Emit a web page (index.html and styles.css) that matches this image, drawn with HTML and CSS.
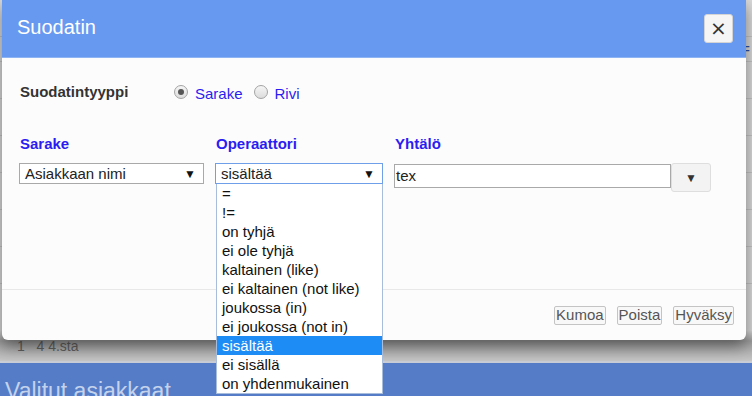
FILE: index.html
```html
<!DOCTYPE html>
<html>
  <head>
    <title>Suodatin</title>
    <meta name="viewport" content="width=device-width,initial-scale=1">
    <link rel="stylesheet" href="styles.css">
  </head>
  <body>
    <div class="page">
      <div class="page-rows">
        <div class="page-row"></div>
        <div class="page-row page-row-link">=</div>
        <div class="page-row"></div>
        <div class="page-row"></div>
        <div class="page-row"></div>
        <div class="page-row"></div>
        <div class="page-row"></div>
        <div class="page-row"></div>
        <div class="page-foot">1&nbsp;&nbsp;&nbsp;4 4.sta</div>
      </div>
      <div class="page-bar">Valitut asiakkaat</div>
    </div>

    <div class="modal">
      <div class="modal-header">
        <div class="modal-title">Suodatin</div>
        <button class="modal-close">&times;</button>
      </div>
      <div class="modal-body">
        <div class="type-row">
          <div class="type-label">Suodatintyyppi</div>
          <label class="radio"><span class="radio-dot radio-dot-on"></span>Sarake</label>
          <label class="radio"><span class="radio-dot"></span>Rivi</label>
        </div>
        <div class="fields">
          <div class="field field-column">
            <div class="field-label">Sarake</div>
            <div class="select"><span>Asiakkaan nimi</span><span class="arrow">&#9660;</span></div>
          </div>
          <div class="field field-op">
            <div class="field-label">Operaattori</div>
            <div class="select select-open"><span>sisältää</span><span class="arrow">&#9660;</span></div>
            <ul class="options">
              <li>=</li>
              <li>!=</li>
              <li>on tyhjä</li>
              <li>ei ole tyhjä</li>
              <li>kaltainen (like)</li>
              <li>ei kaltainen (not like)</li>
              <li>joukossa (in)</li>
              <li>ei joukossa (not in)</li>
              <li class="selected">sisältää</li>
              <li>ei sisällä</li>
              <li>on yhdenmukainen</li>
            </ul>
          </div>
          <div class="field field-value">
            <div class="field-label">Yhtälö</div>
            <div class="value-row">
              <div class="value-input">tex</div>
              <button class="value-button">&#9660;</button>
            </div>
          </div>
        </div>
      </div>
      <div class="modal-footer">
        <button class="btn">Kumoa</button>
        <button class="btn">Poista</button>
        <button class="btn">Hyväksy</button>
      </div>
    </div>
  </body>
</html>
```

FILE: styles.css
```css
html, body {
  margin: 0;
  height: 396px;
  overflow: hidden;
  font-family: "Liberation Sans", Arial, sans-serif;
}
body {
  background-color: #d6d6d6;
  position: relative;
}
.page {
  display: flex;
  flex-direction: column;
  height: 396px;
  overflow: hidden;
}
.page-rows {
  flex: 0 0 361px;
  display: flex;
  flex-direction: column;
  background: linear-gradient(#dadada 0, #dadada 330px, #9c9c9c 341px, #b4b4b4 352px, #c6c6c6 361px);
  border-bottom: 2px solid #c9cdd6;
}
.page-row {
  flex: none;
  height: 36px;
  border-bottom: 1px solid #c4c4c4;
  color: #2c4fa8;
  text-align: right;
  padding-right: 2px;
  font-size: 14px;
  line-height: 36px;
}
.page-row-link {
  height: 24px;
  line-height: 24px;
}
.page-foot {
  margin-top: auto;
  padding: 0 0 7px 17px;
  font-size: 14px;
  color: #5f5f5f;
}
.page-bar {
  flex: 1 0 auto;
  background-color: #557dc7;
  color: #c4d2ec;
  font-size: 23px;
  padding: 15px 5px 0;
  white-space: nowrap;
}

.modal {
  position: absolute;
  left: 2px;
  top: 0;
  width: 744px;
  height: 340px;
  display: flex;
  flex-direction: column;
  background-color: #fcfcfc;
  border-radius: 0 0 6px 6px;
  box-shadow: 0 6px 16px rgba(0, 0, 0, 0.45);
}
.modal-header {
  height: 57px;
  display: flex;
  align-items: center;
  justify-content: space-between;
  padding: 0 13px 0 15px;
  background-color: #6899f0;
  border-bottom: 1px solid #8fb4f3;
}
.modal-title {
  font-size: 20px;
  color: #ffffff;
  padding-bottom: 2px;
}
.modal-close {
  width: 29px;
  height: 29px;
  padding: 0;
  border: 1px solid #d4d4d4;
  border-radius: 3px;
  background-color: #f5f5f5;
  color: #333333;
  font-family: "DejaVu Sans", sans-serif;
  font-size: 20px;
  line-height: 25px;
}
.modal-body {
  flex-grow: 1;
  padding: 25px 0 0 17px;
}
.type-row {
  display: flex;
  align-items: center;
  height: 20px;
}
.type-label {
  width: 154px;
  padding-left: 1px;
  font-size: 15px;
  font-weight: 700;
  color: #333333;
  margin-bottom: 3px;
}
.radio {
  display: flex;
  align-items: center;
  font-size: 15px;
  color: #2b1cf2;
  margin-right: 11px;
}
.radio-dot {
  width: 14px;
  height: 14px;
  border: 1px solid #a3a3a3;
  border-radius: 50%;
  background: linear-gradient(#f6f6f6, #dcdcdc);
  margin: 0 7px 0 0;
  box-sizing: border-box;
  position: relative;
  top: -1px;
}
.radio-dot-on::after {
  content: "";
  position: absolute;
  left: 3px;
  top: 3px;
  width: 6px;
  height: 6px;
  border-radius: 50%;
  background-color: #555555;
}
.fields {
  display: flex;
  margin-top: 32px;
}
.field-label {
  font-size: 15px;
  font-weight: 700;
  color: #2b1cf2;
  height: 28px;
  padding-left: 1px;
}
.field-column {
  width: 185px;
  margin-right: 11px;
}
.field-op {
  width: 168px;
  margin-right: 11px;
  position: relative;
}
.select {
  height: 19px;
  display: flex;
  align-items: center;
  justify-content: space-between;
  padding: 0 7px 0 5px;
  border: 1px solid #a9a9a9;
  background-color: #ffffff;
  font-size: 15px;
  color: #222222;
}
.select-open {
  border-color: #6f9fe8;
}
.arrow {
  font-size: 12px;
  color: #111111;
}
.options {
  position: absolute;
  left: 1px;
  top: 49px;
  width: 165px;
  margin: 0;
  padding: 0;
  list-style: none;
  background-color: #ffffff;
  border: 1px solid #a8bcdc;
  border-top: none;
}
.options li {
  height: 19px;
  line-height: 19px;
  padding-left: 5px;
  font-size: 15px;
  color: #111111;
}
.options li.selected {
  background-color: #1e8cf5;
  color: #ffffff;
}
.value-row {
  display: flex;
  align-items: flex-start;
}
.value-input {
  width: 274px;
  height: 22px;
  line-height: 22px;
  border: 1px solid #a9a9a9;
  background-color: #ffffff;
  padding-left: 1px;
  font-size: 15px;
  color: #222222;
  margin-top: 1px;
}
.value-button {
  width: 40px;
  height: 29px;
  border: 1px solid #dedede;
  border-radius: 3px;
  background-color: #f3f3f3;
  color: #333333;
  font-size: 12px;
  padding: 0;
}
.modal-footer {
  height: 50px;
  display: flex;
  align-items: center;
  justify-content: flex-end;
  gap: 11px;
  padding-right: 12px;
  border-top: 1px solid #e8e8e8;
}
.btn {
  height: 19px;
  padding: 0 1px;
  border: 1px solid #c4c4c4;
  border-radius: 2px;
  background-color: #f8f8f8;
  font-family: "Liberation Sans", Arial, sans-serif;
  font-size: 15px;
  line-height: 16px;
  color: #555555;
}
```
